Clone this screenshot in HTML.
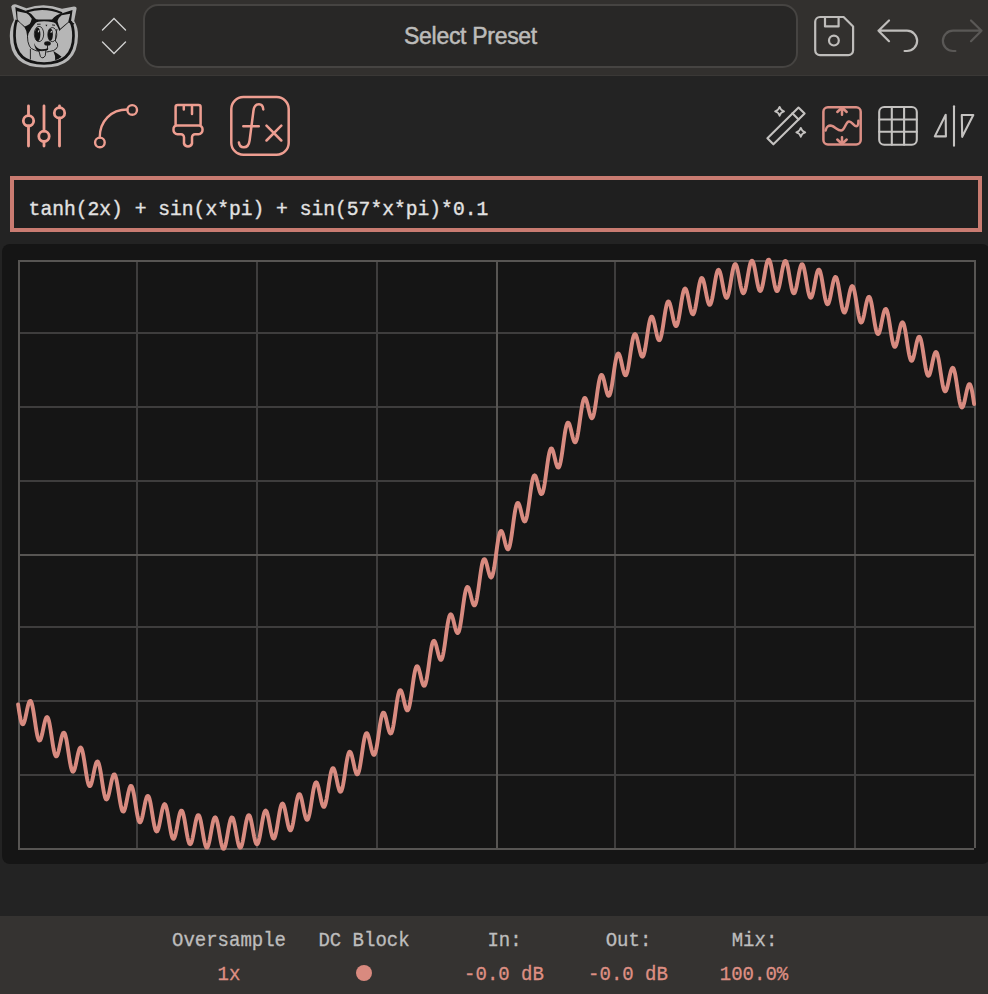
<!DOCTYPE html>
<html>
<head>
<meta charset="utf-8">
<style>
html,body{margin:0;padding:0;}
body{width:988px;height:994px;overflow:hidden;background:#232323;position:relative;font-family:"Liberation Sans",sans-serif;}
.abs{position:absolute;}
#header{left:0;top:0;width:988px;height:75px;background:#32302e;border-bottom:1px solid #3a3836;}
#preset{left:142.5px;top:4px;width:651.5px;height:59.6px;border:2px solid #464442;border-radius:15px;background:#282726;}
#presetText{left:143px;top:23px;width:655px;text-align:center;color:#bdbcba;font-size:23px;letter-spacing:-0.3px;-webkit-text-stroke:0.5px #bdbcba;font-family:"Liberation Sans",sans-serif;line-height:26px;}
#expr{left:10px;top:176px;width:964px;height:48px;border:4px solid #c97b71;background:#1f1f1f;}
#exprText{left:28.6px;top:197px;-webkit-text-stroke:0.35px #e2e2e2;color:#e2e2e2;font-family:"Liberation Mono",monospace;font-size:19.65px;line-height:26px;white-space:pre;}
#panel{left:2px;top:244px;width:988px;height:620px;background:#151515;border-radius:8px;}
#footer{left:0;top:916px;width:988px;height:78px;background:#353331;}
.lbl{transform:scaleY(1.1);transform-origin:50% 16px;-webkit-text-stroke:0.3px #bdbdbd;font-family:"Liberation Mono",monospace;font-size:19px;color:#bdbdbd;white-space:pre;text-align:center;width:200px;line-height:22px;}
.val{transform:scaleY(1.1);transform-origin:50% 16px;-webkit-text-stroke:0.3px #de8f83;font-family:"Liberation Mono",monospace;font-size:19px;color:#de8f83;white-space:pre;text-align:center;width:200px;line-height:22px;}
svg{position:absolute;left:0;top:0;}
</style>
</head>
<body>
<div id="header" class="abs"></div>
<div id="preset" class="abs"></div>
<div id="presetText" class="abs">Select Preset</div>
<div id="expr" class="abs"></div>
<div id="exprText" class="abs">tanh(2x) + sin(x*pi) + sin(57*x*pi)*0.1</div>
<div id="panel" class="abs"></div>
<div id="footer" class="abs"></div>
<div class="abs lbl" style="left:129px;top:930px;">Oversample</div>
<div class="abs val" style="left:129px;top:964px;">1x</div>
<div class="abs lbl" style="left:264px;top:930px;">DC Block</div>
<div class="abs lbl" style="left:404.5px;top:930px;">In:</div>
<div class="abs val" style="left:404px;top:964px;">-0.0 dB</div>
<div class="abs lbl" style="left:528.5px;top:930px;">Out:</div>
<div class="abs val" style="left:528px;top:964px;">-0.0 dB</div>
<div class="abs lbl" style="left:654.5px;top:930px;">Mix:</div>
<div class="abs val" style="left:654px;top:964px;">100.0%</div>
<svg width="988" height="994" viewBox="0 0 988 994">
<!-- grid -->
<g stroke="#3e3d3d" stroke-width="2" fill="none">
<path d="M137 262V848M257 262V848M377 262V848M615 262V848M735 262V848M855 262V848"/>
<path d="M20 333H974M20 407H974M20 481H974M20 627H974M20 701H974M20 775H974"/>
</g>
<g stroke="#575553" stroke-width="2" fill="none">
<path d="M497 262V848M20 555H974"/>
<path d="M19 260V850M18 261H976M975 260V848M18 849H974"/>
</g>
<!-- curve -->
<path d="M18.1 704.4 18.6 707.8 19.1 711.1 19.6 714.2 20.1 717.0 20.6 719.4 21.1 721.4 21.6 722.9 22.1 723.9 22.6 724.3 23.1 724.2 23.6 723.6 24.1 722.4 24.6 720.9 25.1 719.0 25.6 716.8 26.1 714.5 26.6 712.1 27.1 709.7 27.6 707.4 28.1 705.3 28.6 703.6 29.1 702.2 29.6 701.3 30.1 700.9 30.6 701.0 31.1 701.7 31.6 702.9 32.1 704.6 32.6 706.8 33.1 709.4 33.6 712.4 34.1 715.6 34.6 718.9 35.1 722.3 35.6 725.7 36.1 728.9 36.6 731.8 37.1 734.5 37.6 736.7 38.1 738.4 38.6 739.7 39.1 740.4 39.6 740.6 40.1 740.2 40.6 739.3 41.1 738.0 41.6 736.3 42.1 734.3 42.6 732.0 43.1 729.6 43.6 727.1 44.1 724.8 44.6 722.6 45.1 720.6 45.6 719.1 46.1 717.9 46.6 717.2 47.1 717.0 47.6 717.4 48.1 718.3 48.6 719.7 49.1 721.6 49.6 724.0 50.1 726.8 50.6 729.8 51.1 733.1 51.6 736.4 52.1 739.8 52.6 743.1 53.1 746.2 53.6 749.0 54.1 751.4 54.6 753.5 55.1 755.0 55.6 756.0 56.1 756.4 56.6 756.3 57.1 755.7 57.6 754.6 58.1 753.1 58.6 751.2 59.1 749.0 59.6 746.7 60.1 744.2 60.6 741.8 61.1 739.5 61.6 737.3 62.1 735.5 62.6 734.1 63.1 733.1 63.6 732.7 64.1 732.7 64.6 733.3 65.1 734.4 65.6 736.1 66.1 738.2 66.6 740.7 67.1 743.6 67.6 746.8 68.1 750.1 68.6 753.4 69.1 756.8 69.6 759.9 70.1 762.9 70.6 765.5 71.1 767.8 71.6 769.5 72.1 770.8 72.6 771.5 73.1 771.7 73.6 771.3 74.1 770.5 74.6 769.1 75.1 767.4 75.6 765.4 76.1 763.1 76.6 760.6 77.1 758.2 77.6 755.7 78.1 753.5 78.6 751.5 79.1 749.8 79.6 748.6 80.1 747.8 80.6 747.5 81.1 747.8 81.6 748.6 82.1 750.0 82.6 751.8 83.1 754.1 83.6 756.8 84.1 759.8 84.6 763.0 85.1 766.3 85.6 769.6 86.1 772.9 86.6 775.9 87.1 778.7 87.6 781.1 88.1 783.1 88.6 784.7 89.1 785.6 89.6 786.1 90.1 786.0 90.6 785.4 91.1 784.3 91.6 782.7 92.1 780.8 92.6 778.6 93.1 776.2 93.6 773.7 94.1 771.2 94.6 768.8 95.1 766.7 95.6 764.8 96.1 763.2 96.6 762.2 97.1 761.6 97.6 761.5 98.1 762.0 98.6 763.1 99.1 764.6 99.6 766.6 100.1 769.1 100.6 771.9 101.1 774.9 101.6 778.2 102.1 781.5 102.6 784.8 103.1 787.9 103.6 790.8 104.1 793.4 104.6 795.6 105.1 797.4 105.6 798.6 106.1 799.3 106.6 799.5 107.1 799.1 107.6 798.2 108.1 796.9 108.6 795.1 109.1 793.0 109.6 790.7 110.1 788.2 110.6 785.7 111.1 783.2 111.6 780.8 112.1 778.7 112.6 777.0 113.1 775.6 113.6 774.7 114.1 774.4 114.6 774.5 115.1 775.2 115.6 776.5 116.1 778.2 116.6 780.4 117.1 783.0 117.6 785.8 118.1 789.0 118.6 792.2 119.1 795.5 119.6 798.6 120.1 801.7 120.6 804.4 121.1 806.8 121.6 808.8 122.1 810.3 122.6 811.2 123.1 811.6 123.6 811.5 124.1 810.9 124.6 809.7 125.1 808.1 125.6 806.2 126.1 803.9 126.6 801.5 127.1 798.9 127.6 796.3 128.1 793.8 128.6 791.6 129.1 789.6 129.6 787.9 130.1 786.7 130.6 786.0 131.1 785.9 131.6 786.2 132.1 787.1 132.6 788.6 133.1 790.5 133.6 792.8 134.1 795.5 134.6 798.4 135.1 801.6 135.6 804.8 136.1 808.0 136.6 811.1 137.1 813.9 137.6 816.5 138.1 818.6 138.6 820.4 139.1 821.6 139.6 822.2 140.1 822.4 140.6 822.0 141.1 821.0 141.6 819.6 142.1 817.8 142.6 815.7 143.1 813.3 143.6 810.7 144.1 808.1 144.6 805.5 145.1 803.0 145.6 800.8 146.1 798.9 146.6 797.4 147.1 796.4 147.6 795.9 148.1 795.9 148.6 796.5 149.1 797.6 149.6 799.2 150.1 801.2 150.6 803.7 151.1 806.5 151.6 809.5 152.1 812.6 152.6 815.8 153.1 818.9 153.6 821.8 154.1 824.5 154.6 826.8 155.1 828.8 155.6 830.2 156.1 831.1 156.6 831.5 157.1 831.3 157.6 830.6 158.1 829.4 158.6 827.8 159.1 825.7 159.6 823.4 160.1 820.9 160.6 818.2 161.1 815.5 161.6 812.9 162.1 810.5 162.6 808.4 163.1 806.7 163.6 805.3 164.1 804.5 164.6 804.1 165.1 804.4 165.6 805.1 166.1 806.4 166.6 808.2 167.1 810.4 167.6 812.9 168.1 815.7 168.6 818.8 169.1 821.9 169.6 825.0 170.1 828.0 170.6 830.7 171.1 833.2 171.6 835.3 172.1 837.0 172.6 838.1 173.1 838.7 173.6 838.8 174.1 838.3 174.6 837.3 175.1 835.9 175.6 834.0 176.1 831.7 176.6 829.3 177.1 826.6 177.6 823.8 178.1 821.1 178.6 818.6 179.1 816.2 179.6 814.2 180.1 812.6 180.6 811.4 181.1 810.7 181.6 810.6 182.1 811.0 182.6 811.9 183.1 813.4 183.6 815.3 184.1 817.6 184.6 820.2 185.1 823.1 185.6 826.1 186.1 829.2 186.6 832.2 187.1 835.0 187.6 837.6 188.1 839.9 188.6 841.7 189.1 843.1 189.6 843.9 190.1 844.2 190.6 844.0 191.1 843.2 191.6 842.0 192.1 840.2 192.6 838.1 193.1 835.7 193.6 833.1 194.1 830.3 194.6 827.5 195.1 824.8 195.6 822.2 196.1 820.0 196.6 818.0 197.1 816.6 197.6 815.5 198.1 815.1 198.6 815.1 199.1 815.7 199.6 816.8 200.1 818.4 200.6 820.4 201.1 822.9 201.6 825.5 202.1 828.4 202.6 831.4 203.1 834.4 203.6 837.3 204.1 840.0 204.6 842.4 205.1 844.4 205.6 845.9 206.1 847.0 206.6 847.5 207.1 847.5 207.6 847.0 208.1 845.9 208.6 844.4 209.1 842.4 209.6 840.1 210.1 837.5 210.6 834.7 211.1 831.8 211.6 829.0 212.1 826.3 212.6 823.8 213.1 821.6 213.6 819.8 214.1 818.5 214.6 817.6 215.1 817.3 215.6 817.5 216.1 818.3 216.6 819.6 217.1 821.3 217.6 823.5 218.1 826.0 218.6 828.7 219.1 831.6 219.6 834.5 220.1 837.4 220.6 840.1 221.1 842.6 221.6 844.8 222.1 846.5 222.6 847.8 223.1 848.6 223.6 848.8 224.1 848.5 224.6 847.6 225.1 846.3 225.6 844.4 226.1 842.2 226.6 839.7 227.1 836.9 227.6 834.0 228.1 831.1 228.6 828.3 229.1 825.6 229.6 823.1 230.1 821.1 230.6 819.4 231.1 818.2 231.6 817.5 232.1 817.4 232.6 817.8 233.1 818.7 233.6 820.2 234.1 822.0 234.6 824.3 235.1 826.8 235.6 829.6 236.1 832.4 236.6 835.3 237.1 838.0 237.6 840.6 238.1 842.9 238.6 844.8 239.1 846.3 239.6 847.2 240.1 847.7 240.6 847.6 241.1 847.0 241.6 845.8 242.1 844.2 242.6 842.1 243.1 839.7 243.6 836.9 244.1 834.0 244.6 831.0 245.1 828.1 245.6 825.2 246.1 822.5 246.6 820.2 247.1 818.2 247.6 816.7 248.1 815.7 248.6 815.2 249.1 815.2 249.6 815.8 250.1 816.9 250.6 818.5 251.1 820.5 251.6 822.8 252.1 825.4 252.6 828.1 253.1 830.9 253.6 833.6 254.1 836.3 254.6 838.6 255.1 840.7 255.6 842.3 256.1 843.5 256.6 844.2 257.1 844.3 257.6 843.9 258.1 843.0 258.6 841.5 259.1 839.6 259.6 837.3 260.1 834.6 260.6 831.7 261.1 828.7 261.6 825.6 262.1 822.6 262.6 819.8 263.1 817.2 263.6 814.9 264.1 813.1 264.6 811.7 265.1 810.9 265.6 810.5 266.1 810.8 266.6 811.5 267.1 812.8 267.6 814.4 268.1 816.5 268.6 818.9 269.1 821.5 269.6 824.2 270.1 826.9 270.6 829.5 271.1 832.0 271.6 834.1 272.1 835.9 272.6 837.3 273.1 838.2 273.6 838.6 274.1 838.4 274.6 837.7 275.1 836.4 275.6 834.6 276.1 832.5 276.6 829.9 277.1 827.1 277.6 824.0 278.1 820.9 278.6 817.8 279.1 814.8 279.6 811.9 280.1 809.4 280.6 807.3 281.1 805.6 281.6 804.4 282.1 803.7 282.6 803.5 283.1 803.9 283.6 804.8 284.1 806.2 284.6 808.0 285.1 810.2 285.6 812.6 286.1 815.2 286.6 817.8 287.1 820.4 287.6 822.9 288.1 825.2 288.6 827.1 289.1 828.7 289.6 829.7 290.1 830.3 290.6 830.4 291.1 829.9 291.6 828.8 292.1 827.3 292.6 825.2 293.1 822.8 293.6 820.0 294.1 817.0 294.6 813.9 295.1 810.6 295.6 807.5 296.1 804.5 296.6 801.7 297.1 799.3 297.6 797.3 298.1 795.7 298.6 794.6 299.1 794.1 299.6 794.2 300.1 794.7 300.6 795.8 301.1 797.3 301.6 799.2 302.1 801.4 302.6 803.8 303.1 806.4 303.6 809.0 304.1 811.5 304.6 813.8 305.1 815.8 305.6 817.5 306.1 818.8 306.6 819.6 307.1 819.9 307.6 819.6 308.1 818.8 308.6 817.4 309.1 815.6 309.6 813.3 310.1 810.6 310.6 807.6 311.1 804.5 311.6 801.2 312.1 797.9 312.6 794.8 313.1 791.8 313.6 789.1 314.1 786.8 314.6 784.9 315.1 783.5 315.6 782.6 316.1 782.3 316.6 782.5 317.1 783.2 317.6 784.4 318.1 786.0 318.6 788.0 319.1 790.3 319.6 792.7 320.1 795.2 320.6 797.7 321.1 800.0 321.6 802.2 322.1 804.0 322.6 805.4 323.1 806.4 323.6 806.9 324.1 806.9 324.6 806.3 325.1 805.1 325.6 803.5 326.1 801.3 326.6 798.8 327.1 795.9 327.6 792.8 328.1 789.5 328.6 786.1 329.1 782.8 329.6 779.7 330.1 776.7 330.6 774.1 331.1 771.9 331.6 770.2 332.1 769.0 332.6 768.3 333.1 768.1 333.6 768.5 334.1 769.4 334.6 770.7 335.1 772.4 335.6 774.5 336.1 776.8 336.6 779.2 337.1 781.6 337.6 784.0 338.1 786.2 338.6 788.1 339.1 789.7 339.6 790.9 340.1 791.6 340.6 791.8 341.1 791.4 341.6 790.5 342.1 789.0 342.6 787.1 343.1 784.7 343.6 781.9 344.1 778.9 344.6 775.6 345.1 772.2 345.6 768.8 346.1 765.4 346.6 762.3 347.1 759.4 347.6 756.9 348.1 754.9 348.6 753.3 349.1 752.2 349.6 751.7 350.1 751.8 350.6 752.3 351.1 753.3 351.6 754.8 352.1 756.6 352.6 758.7 353.1 761.0 353.6 763.4 354.1 765.7 354.6 768.0 355.1 770.0 355.6 771.7 356.1 773.1 356.6 774.0 357.1 774.4 357.6 774.2 358.1 773.5 358.6 772.3 359.1 770.6 359.6 768.4 360.1 765.7 360.6 762.7 361.1 759.5 361.6 756.1 362.1 752.6 362.6 749.2 363.1 745.8 363.6 742.8 364.1 740.0 364.6 737.6 365.1 735.7 365.6 734.3 366.1 733.4 366.6 733.1 367.1 733.3 367.6 734.0 368.1 735.2 368.6 736.8 369.1 738.7 369.6 740.8 370.1 743.1 370.6 745.4 371.1 747.7 371.6 749.8 372.1 751.6 372.6 753.1 373.1 754.2 373.6 754.8 374.1 754.9 374.6 754.5 375.1 753.5 375.6 751.9 376.1 749.9 376.6 747.4 377.1 744.6 377.6 741.4 378.1 738.0 378.6 734.5 379.1 731.0 379.6 727.5 380.1 724.2 380.6 721.2 381.1 718.6 381.6 716.3 382.1 714.6 382.6 713.4 383.1 712.7 383.6 712.6 384.1 712.9 384.6 713.8 385.1 715.1 385.6 716.8 386.1 718.8 386.6 720.9 387.1 723.2 387.6 725.4 388.1 727.6 388.6 729.5 389.1 731.1 389.6 732.4 390.1 733.2 390.6 733.5 391.1 733.3 391.6 732.6 392.1 731.3 392.6 729.5 393.1 727.2 393.6 724.5 394.1 721.4 394.6 718.1 395.1 714.6 395.6 711.0 396.1 707.4 396.6 704.0 397.1 700.8 397.6 697.9 398.1 695.3 398.6 693.3 399.1 691.7 399.6 690.7 400.1 690.2 400.6 690.2 401.1 690.8 401.6 691.8 402.1 693.3 402.6 695.0 403.1 697.0 403.6 699.2 404.1 701.4 404.6 703.6 405.1 705.6 405.6 707.4 406.1 708.8 406.6 709.8 407.1 710.4 407.6 710.4 408.1 709.9 408.6 708.9 409.1 707.3 409.6 705.2 410.1 702.6 410.6 699.7 411.1 696.5 411.6 693.0 412.1 689.4 412.6 685.7 413.1 682.2 413.6 678.8 414.1 675.6 414.6 672.9 415.1 670.5 415.6 668.6 416.1 667.3 416.6 666.4 417.1 666.1 417.6 666.4 418.1 667.1 418.6 668.3 419.1 669.9 419.6 671.7 420.1 673.7 420.6 675.9 421.1 678.1 421.6 680.1 422.1 682.0 422.6 683.6 423.1 684.8 423.6 685.5 424.1 685.8 424.6 685.6 425.1 684.8 425.6 683.5 426.1 681.6 426.6 679.3 427.1 676.5 427.6 673.4 428.1 670.0 428.6 666.4 429.1 662.7 429.6 659.0 430.1 655.5 430.6 652.2 431.1 649.2 431.6 646.5 432.1 644.3 432.6 642.6 433.1 641.5 433.6 640.9 434.1 640.8 434.6 641.2 435.1 642.1 435.6 643.5 436.1 645.1 436.6 647.0 437.1 649.1 437.6 651.2 438.1 653.3 438.6 655.3 439.1 657.0 439.6 658.4 440.1 659.4 440.6 659.9 441.1 659.9 441.6 659.4 442.1 658.3 442.6 656.7 443.1 654.6 443.6 652.0 444.1 649.0 444.6 645.7 445.1 642.2 445.6 638.5 446.1 634.8 446.6 631.1 447.1 627.7 447.6 624.4 448.1 621.6 448.6 619.1 449.1 617.1 449.6 615.6 450.1 614.7 450.6 614.3 451.1 614.4 451.6 615.0 452.1 616.1 452.6 617.6 453.1 619.3 453.6 621.3 454.1 623.4 454.6 625.5 455.1 627.5 455.6 629.3 456.1 630.9 456.6 632.0 457.1 632.8 457.6 633.1 458.1 632.8 458.6 632.0 459.1 630.7 459.6 628.8 460.1 626.4 460.6 623.6 461.1 620.5 461.6 617.0 462.1 613.4 462.6 609.7 463.1 606.0 463.6 602.4 464.1 599.0 464.6 595.9 465.1 593.1 465.6 590.8 466.1 589.1 466.6 587.8 467.1 587.1 467.6 586.9 468.1 587.3 468.6 588.1 469.1 589.3 469.6 590.9 470.1 592.8 470.6 594.8 471.1 596.9 471.6 598.9 472.1 600.8 472.6 602.5 473.1 603.9 473.6 604.9 474.1 605.4 474.6 605.4 475.1 604.9 475.6 603.8 476.1 602.2 476.6 600.1 477.1 597.5 477.6 594.5 478.1 591.2 478.6 587.7 479.1 584.0 479.6 580.2 480.1 576.5 480.6 573.0 481.1 569.7 481.6 566.8 482.1 564.2 482.6 562.1 483.1 560.6 483.6 559.6 484.1 559.1 484.6 559.1 485.1 559.7 485.6 560.7 486.1 562.1 486.6 563.8 487.1 565.7 487.6 567.8 488.1 569.9 488.6 571.8 489.1 573.7 489.6 575.2 490.1 576.4 490.6 577.2 491.1 577.5 491.6 577.2 492.1 576.4 492.6 575.1 493.1 573.3 493.6 570.9 494.1 568.2 494.6 565.0 495.1 561.6 495.6 557.9 496.1 554.2 496.6 550.5 497.1 546.8 497.6 543.4 498.1 540.2 498.6 537.5 499.1 535.1 499.6 533.3 500.1 532.0 500.6 531.2 501.1 530.9 501.6 531.2 502.1 532.0 502.6 533.2 503.1 534.7 503.6 536.6 504.1 538.5 504.6 540.6 505.1 542.7 505.6 544.6 506.1 546.3 506.6 547.7 507.1 548.7 507.6 549.3 508.1 549.3 508.6 548.8 509.1 547.8 509.6 546.3 510.1 544.2 510.6 541.6 511.1 538.7 511.6 535.4 512.1 531.9 512.6 528.2 513.1 524.4 513.6 520.7 514.1 517.2 514.6 513.9 515.1 510.9 515.6 508.3 516.1 506.2 516.6 504.6 517.1 503.5 517.6 503.0 518.1 503.0 518.6 503.5 519.1 504.5 519.6 505.9 520.1 507.6 520.6 509.5 521.1 511.5 521.6 513.6 522.1 515.6 522.6 517.5 523.1 519.1 523.6 520.3 524.1 521.1 524.6 521.5 525.1 521.3 525.6 520.6 526.1 519.3 526.6 517.6 527.1 515.3 527.6 512.5 528.1 509.4 528.6 506.0 529.1 502.4 529.6 498.7 530.1 495.0 530.6 491.4 531.1 487.9 531.6 484.8 532.1 482.0 532.6 479.6 533.1 477.7 533.6 476.4 534.1 475.6 534.6 475.3 535.1 475.6 535.6 476.4 536.1 477.5 536.6 479.1 537.1 480.9 537.6 482.9 538.1 485.0 538.6 487.1 539.1 489.1 539.6 490.8 540.1 492.3 540.6 493.4 541.1 494.0 541.6 494.1 542.1 493.7 542.6 492.8 543.1 491.3 543.6 489.3 544.1 486.8 544.6 484.0 545.1 480.7 545.6 477.3 546.1 473.6 546.6 469.9 547.1 466.2 547.6 462.7 548.1 459.4 548.6 456.4 549.1 453.8 549.6 451.7 550.1 450.1 550.6 449.0 551.1 448.5 551.6 448.5 552.1 449.0 552.6 450.0 553.1 451.4 553.6 453.1 554.1 455.1 554.6 457.2 555.1 459.3 555.6 461.4 556.1 463.3 556.6 464.9 557.1 466.3 557.6 467.2 558.1 467.6 558.6 467.5 559.1 466.9 559.6 465.8 560.1 464.1 560.6 461.9 561.1 459.2 561.6 456.2 562.1 452.9 562.6 449.4 563.1 445.7 563.6 442.0 564.1 438.4 564.6 435.0 565.1 431.9 565.6 429.1 566.1 426.8 566.6 424.9 567.1 423.6 567.6 422.8 568.1 422.6 568.6 422.9 569.1 423.6 569.6 424.8 570.1 426.4 570.6 428.3 571.1 430.3 571.6 432.5 572.1 434.7 572.6 436.7 573.1 438.5 573.6 440.1 574.1 441.3 574.6 442.0 575.1 442.3 575.6 442.0 576.1 441.1 576.6 439.8 577.1 437.9 577.6 435.5 578.1 432.8 578.6 429.6 579.1 426.2 579.6 422.7 580.1 419.0 580.6 415.4 581.1 411.9 581.6 408.7 582.1 405.8 582.6 403.2 583.1 401.1 583.6 399.5 584.1 398.5 584.6 398.0 585.1 398.0 585.6 398.6 586.1 399.6 586.6 401.0 587.1 402.8 587.6 404.8 588.1 407.0 588.6 409.2 589.1 411.4 589.6 413.4 590.1 415.1 590.6 416.6 591.1 417.6 591.6 418.2 592.1 418.2 592.6 417.7 593.1 416.7 593.6 415.1 594.1 413.1 594.6 410.5 595.1 407.6 595.6 404.4 596.1 401.0 596.6 397.4 597.1 393.8 597.6 390.3 598.1 387.0 598.6 383.9 599.1 381.2 599.6 378.9 600.1 377.1 600.6 375.8 601.1 375.1 601.6 374.9 602.1 375.2 602.6 376.0 603.1 377.3 603.6 378.9 604.1 380.8 604.6 383.0 605.1 385.2 605.6 387.5 606.1 389.6 606.6 391.6 607.1 393.3 607.6 394.6 608.1 395.5 608.6 395.8 609.1 395.7 609.6 395.0 610.1 393.8 610.6 392.1 611.1 389.8 611.6 387.2 612.1 384.2 612.6 380.9 613.1 377.4 613.6 373.9 614.1 370.4 614.6 367.0 615.1 363.8 615.6 361.0 616.1 358.5 616.6 356.5 617.1 354.9 617.6 353.9 618.1 353.5 618.6 353.6 619.1 354.2 619.6 355.3 620.1 356.8 620.6 358.6 621.1 360.7 621.6 363.0 622.1 365.3 622.6 367.6 623.1 369.7 623.6 371.6 624.1 373.2 624.6 374.4 625.1 375.1 625.6 375.3 626.1 375.0 626.6 374.1 627.1 372.7 627.6 370.8 628.1 368.4 628.6 365.6 629.1 362.6 629.6 359.2 630.1 355.8 630.6 352.3 631.1 348.9 631.6 345.7 632.1 342.7 632.6 340.0 633.1 337.8 633.6 336.1 634.1 334.9 634.6 334.2 635.1 334.0 635.6 334.4 636.1 335.3 636.6 336.7 637.1 338.4 637.6 340.4 638.1 342.7 638.6 345.0 639.1 347.4 639.6 349.7 640.1 351.8 640.6 353.6 641.1 355.1 641.6 356.1 642.1 356.6 642.6 356.7 643.1 356.2 643.6 355.1 644.1 353.5 644.6 351.5 645.1 349.0 645.6 346.1 646.1 343.0 646.6 339.6 647.1 336.2 647.6 332.8 648.1 329.5 648.6 326.5 649.1 323.7 649.6 321.3 650.1 319.4 650.6 317.9 651.1 317.0 651.6 316.6 652.1 316.8 652.6 317.5 653.1 318.7 653.6 320.3 654.1 322.2 654.6 324.4 655.1 326.8 655.6 329.2 656.1 331.6 656.6 333.9 657.1 336.0 657.6 337.7 658.1 339.0 658.6 339.9 659.1 340.3 659.6 340.1 660.1 339.4 660.6 338.2 661.1 336.5 661.6 334.3 662.1 331.7 662.6 328.7 663.1 325.6 663.6 322.3 664.1 318.9 664.6 315.6 665.1 312.5 665.6 309.6 666.1 307.1 666.6 304.9 667.1 303.3 667.6 302.1 668.1 301.5 668.6 301.5 669.1 302.0 669.6 303.0 670.1 304.4 670.6 306.2 671.1 308.4 671.6 310.7 672.1 313.2 672.6 315.7 673.1 318.1 673.6 320.4 674.1 322.4 674.6 324.0 675.1 325.2 675.6 325.9 676.1 326.1 676.6 325.8 677.1 324.9 677.6 323.5 678.1 321.6 678.6 319.3 679.1 316.6 679.6 313.6 680.1 310.5 680.6 307.2 681.1 303.9 681.6 300.8 682.1 297.8 682.6 295.1 683.1 292.8 683.6 291.0 684.1 289.6 684.6 288.8 685.1 288.5 685.6 288.8 686.1 289.6 686.6 290.9 687.1 292.6 687.6 294.6 688.1 296.9 688.6 299.4 689.1 302.0 689.6 304.6 690.1 307.0 690.6 309.2 691.1 311.1 691.6 312.6 692.1 313.7 692.6 314.2 693.1 314.3 693.6 313.8 694.1 312.7 694.6 311.1 695.1 309.1 695.6 306.7 696.1 303.9 696.6 300.9 697.1 297.8 697.6 294.5 698.1 291.4 698.6 288.4 699.1 285.6 699.6 283.2 700.1 281.1 700.6 279.6 701.1 278.5 701.6 278.0 702.1 278.1 702.6 278.7 703.1 279.7 703.6 281.3 704.1 283.2 704.6 285.5 705.1 288.0 705.6 290.6 706.1 293.2 706.6 295.8 707.1 298.2 707.6 300.4 708.1 302.2 708.6 303.6 709.1 304.5 709.6 304.9 710.1 304.7 710.6 304.0 711.1 302.8 711.6 301.1 712.1 299.0 712.6 296.5 713.1 293.6 713.6 290.6 714.1 287.5 714.6 284.4 715.1 281.3 715.6 278.5 716.1 275.9 716.6 273.8 717.1 272.0 717.6 270.7 718.1 270.0 718.6 269.8 719.1 270.2 719.6 271.1 720.1 272.5 720.6 274.3 721.1 276.4 721.6 278.9 722.1 281.5 722.6 284.2 723.1 286.9 723.6 289.5 724.1 291.9 724.6 294.0 725.1 295.6 725.6 296.9 726.1 297.6 726.6 297.9 727.1 297.5 727.6 296.7 728.1 295.3 728.6 293.5 729.1 291.2 729.6 288.6 730.1 285.8 730.6 282.8 731.1 279.7 731.6 276.7 732.1 273.8 732.6 271.1 733.1 268.8 733.6 266.9 734.1 265.4 734.6 264.5 735.1 264.1 735.6 264.2 736.1 264.9 736.6 266.1 737.1 267.7 737.6 269.8 738.1 272.1 738.6 274.8 739.1 277.5 739.6 280.3 740.1 283.0 740.6 285.6 741.1 287.9 741.6 289.9 742.1 291.5 742.6 292.6 743.1 293.2 743.6 293.2 744.1 292.7 744.6 291.7 745.1 290.2 745.6 288.2 746.1 285.9 746.6 283.2 747.1 280.3 747.6 277.4 748.1 274.4 748.6 271.5 749.1 268.7 749.6 266.3 750.1 264.2 750.6 262.6 751.1 261.4 751.6 260.8 752.1 260.7 752.6 261.2 753.1 262.1 753.6 263.6 754.1 265.5 754.6 267.8 755.1 270.4 755.6 273.1 756.1 276.0 756.6 278.8 757.1 281.6 757.6 284.1 758.1 286.4 758.6 288.2 759.1 289.7 759.6 290.6 760.1 291.0 760.6 290.9 761.1 290.2 761.6 289.0 762.1 287.3 762.6 285.3 763.1 282.8 763.6 280.1 764.1 277.3 764.6 274.4 765.1 271.5 765.6 268.7 766.1 266.2 766.6 264.0 767.1 262.1 767.6 260.8 768.1 259.9 768.6 259.6 769.1 259.8 769.6 260.6 770.1 261.9 770.6 263.6 771.1 265.8 771.6 268.3 772.1 271.0 772.6 273.9 773.1 276.8 773.6 279.7 774.1 282.4 774.6 284.9 775.1 287.1 775.6 288.8 776.1 290.1 776.6 290.9 777.1 291.1 777.6 290.8 778.1 289.9 778.6 288.6 779.1 286.8 779.6 284.6 780.1 282.1 780.6 279.4 781.1 276.6 781.6 273.7 782.1 270.9 782.6 268.3 783.1 266.0 783.6 264.0 784.1 262.5 784.6 261.4 785.1 260.9 785.6 260.9 786.1 261.4 786.6 262.5 787.1 264.0 787.6 266.0 788.1 268.4 788.6 271.1 789.1 274.0 789.6 277.0 790.1 280.0 790.6 282.9 791.1 285.5 791.6 288.0 792.1 290.0 792.6 291.6 793.1 292.7 793.6 293.3 794.1 293.3 794.6 292.9 795.1 291.8 795.6 290.4 796.1 288.4 796.6 286.2 797.1 283.6 797.6 280.9 798.1 278.1 798.6 275.3 799.1 272.7 799.6 270.3 800.1 268.2 800.6 266.4 801.1 265.2 801.6 264.4 802.1 264.2 802.6 264.5 803.1 265.3 803.6 266.7 804.1 268.5 804.6 270.8 805.1 273.4 805.6 276.2 806.1 279.2 806.6 282.3 807.1 285.3 807.6 288.2 808.1 290.8 808.6 293.1 809.1 295.0 809.6 296.5 810.1 297.4 810.6 297.8 811.1 297.7 811.6 297.0 812.1 295.8 812.6 294.2 813.1 292.2 813.6 289.8 814.1 287.3 814.6 284.6 815.1 281.8 815.6 279.1 816.1 276.7 816.6 274.4 817.1 272.5 817.6 271.1 818.1 270.1 818.6 269.6 819.1 269.7 819.6 270.3 820.1 271.4 820.6 273.1 821.1 275.2 821.6 277.7 822.1 280.4 822.6 283.4 823.1 286.5 823.6 289.6 824.1 292.7 824.6 295.5 825.1 298.0 825.6 300.2 826.1 302.0 826.6 303.3 827.1 304.0 827.6 304.3 828.1 303.9 828.6 303.1 829.1 301.7 829.6 300.0 830.1 297.9 830.6 295.5 831.1 292.9 831.6 290.2 832.1 287.5 832.6 285.0 833.1 282.7 833.6 280.6 834.1 279.0 834.6 277.8 835.1 277.1 835.6 276.9 836.1 277.3 836.6 278.2 837.1 279.6 837.6 281.6 838.1 283.9 838.6 286.6 839.1 289.5 839.6 292.6 840.1 295.8 840.6 298.9 841.1 301.9 841.6 304.7 842.1 307.2 842.6 309.2 843.1 310.8 843.6 311.9 844.1 312.5 844.6 312.5 845.1 312.0 845.6 311.0 846.1 309.5 846.6 307.6 847.1 305.4 847.6 302.9 848.1 300.3 848.6 297.7 849.1 295.1 849.6 292.7 850.1 290.6 850.6 288.8 851.1 287.4 851.6 286.4 852.1 286.0 852.6 286.2 853.1 286.8 853.6 288.0 854.1 289.8 854.6 291.9 855.1 294.5 855.6 297.3 856.1 300.4 856.6 303.6 857.1 306.8 857.6 310.0 858.1 312.9 858.6 315.6 859.1 317.9 859.6 319.8 860.1 321.3 860.6 322.2 861.1 322.5 861.6 322.4 862.1 321.7 862.6 320.5 863.1 318.8 863.6 316.8 864.1 314.6 864.6 312.1 865.1 309.5 865.6 306.9 866.1 304.5 866.6 302.2 867.1 300.3 867.6 298.7 868.1 297.5 868.6 296.9 869.1 296.8 869.6 297.2 870.1 298.1 870.6 299.6 871.1 301.6 871.6 304.0 872.1 306.7 872.6 309.8 873.1 312.9 873.6 316.2 874.1 319.4 874.6 322.6 875.1 325.4 875.6 328.0 876.1 330.2 876.6 331.9 877.1 333.2 877.6 333.9 878.1 334.0 878.6 333.7 879.1 332.8 879.6 331.4 880.1 329.7 880.6 327.6 881.1 325.2 881.6 322.7 882.1 320.2 882.6 317.7 883.1 315.4 883.6 313.3 884.1 311.5 884.6 310.2 885.1 309.3 885.6 308.9 886.1 309.1 886.6 309.8 887.1 311.0 887.6 312.8 888.1 315.0 888.6 317.6 889.1 320.5 889.6 323.6 890.1 326.9 890.6 330.2 891.1 333.5 891.6 336.5 892.1 339.3 892.6 341.8 893.1 343.8 893.6 345.3 894.1 346.4 894.6 346.9 895.1 346.8 895.6 346.2 896.1 345.2 896.6 343.6 897.1 341.7 897.6 339.6 898.1 337.2 898.6 334.7 899.1 332.2 899.6 329.8 900.1 327.6 900.6 325.7 901.1 324.1 901.6 323.0 902.1 322.4 902.6 322.3 903.1 322.8 903.6 323.7 904.1 325.3 904.6 327.3 905.1 329.7 905.6 332.5 906.1 335.5 906.6 338.8 907.1 342.1 907.6 345.4 908.1 348.6 908.6 351.6 909.1 354.3 909.6 356.6 910.1 358.4 910.6 359.8 911.1 360.6 911.6 360.9 912.1 360.6 912.6 359.8 913.1 358.6 913.6 356.9 914.1 354.9 914.6 352.7 915.1 350.2 915.6 347.8 916.1 345.3 916.6 343.0 917.1 341.0 917.6 339.3 918.1 337.9 918.6 337.1 919.1 336.7 919.6 336.9 920.1 337.6 920.6 338.9 921.1 340.6 921.6 342.9 922.1 345.5 922.6 348.5 923.1 351.6 923.6 355.0 924.1 358.3 924.6 361.6 925.1 364.8 925.6 367.7 926.1 370.2 926.6 372.3 927.1 374.0 927.6 375.1 928.1 375.7 928.6 375.7 929.1 375.3 929.6 374.3 930.1 372.9 930.6 371.1 931.1 368.9 931.6 366.6 932.1 364.2 932.6 361.7 933.1 359.4 933.6 357.2 934.1 355.3 934.6 353.8 935.1 352.7 935.6 352.1 936.1 352.0 936.6 352.4 937.1 353.4 937.6 354.9 938.1 357.0 938.6 359.4 939.1 362.2 939.6 365.3 940.1 368.6 940.6 372.0 941.1 375.3 941.6 378.6 942.1 381.6 942.6 384.4 943.1 386.8 943.6 388.7 944.1 390.1 944.6 391.0 945.1 391.4 945.6 391.2 946.1 390.5 946.6 389.3 947.1 387.8 947.6 385.8 948.1 383.6 948.6 381.3 949.1 378.8 949.6 376.4 950.1 374.1 950.6 372.1 951.1 370.4 951.6 369.1 952.1 368.2 952.6 367.8 953.1 368.0 953.6 368.7 954.1 370.0 954.6 371.7 955.1 373.9 955.6 376.6 956.1 379.5 956.6 382.7 957.1 386.1 957.6 389.5 958.1 392.8 958.6 396.0 959.1 399.0 959.6 401.6 960.1 403.8 960.6 405.5 961.1 406.7 961.6 407.4 962.1 407.5 962.6 407.1 963.1 406.2 963.6 404.8 964.1 403.1 964.6 401.0 965.1 398.7 965.6 396.3 966.1 393.9 966.6 391.6 967.1 389.4 967.6 387.5 968.1 386.0 968.6 384.8 969.1 384.2 969.6 384.1 970.1 384.5 970.6 385.5 971.1 387.0 971.6 389.0 972.1 391.4 972.6 394.2 973.1 397.3 973.6 400.6 974.1 404.0" stroke="#d88b80" stroke-width="3.9" fill="none" stroke-linejoin="round" stroke-linecap="round"/>
<!-- DC dot -->
<circle cx="364" cy="973" r="8" fill="#d98a7f"/>
<!-- chevrons -->
<g stroke="#cfcfcf" stroke-width="1.4" fill="none" stroke-linecap="round">
<path d="M102.5 30L114 18.5L125.5 30"/>
<path d="M102.5 42L114 53.5L125.5 42"/>
</g>
<!-- save / undo / redo -->
<g stroke="#bfbdbb" stroke-width="2.2" fill="none" stroke-linecap="round" stroke-linejoin="round">
<path d="M843.6 17H820A4.8 4.8 0 0 0 815.2 21.8V50.3A4.8 4.8 0 0 0 820 55.1H848.3A4.8 4.8 0 0 0 853.1 50.3V26.5Z"/>
<path d="M825 17V26.4H838.6V17"/>
<circle cx="833.9" cy="40.6" r="4.9"/>
<path d="M889 20.5L878.5 30.7L889 41.2M878.5 30.7H907A10.15 10.15 0 0 1 907 51H904.6"/>
</g>
<g stroke="#5a5856" stroke-width="2.2" fill="none" stroke-linecap="round" stroke-linejoin="round">
<path d="M971 20.5L981.5 30.7L971 41.2M981.5 30.7H953A10.15 10.15 0 0 0 953 51H955.4"/>
</g>
<!-- toolbar salmon icons -->
<g stroke="#ee9e91" stroke-width="2.8" fill="none" stroke-linecap="round" stroke-linejoin="round">
<path d="M28.5 106V115.5M28.5 126V146M44 106V131M44 141.5V146M59.5 106V107.8M59.5 118V146"/>
<circle cx="28.5" cy="120.8" r="5.2"/>
<circle cx="44" cy="136.3" r="5.2"/>
<circle cx="59.5" cy="112.9" r="5.2"/>
</g>
<g stroke="#ee9e91" stroke-width="2.4" fill="none" stroke-linecap="round" stroke-linejoin="round">
<circle cx="99.9" cy="142.4" r="4.8"/>
<circle cx="132.2" cy="109.9" r="4.8"/>
<path d="M99.7 137.5C99.7 121 111 109.5 127.3 109.5"/>
</g>
<g stroke="#ee9e91" stroke-width="2.5" fill="none" stroke-linecap="round" stroke-linejoin="round">
<path d="M175.6 124.5V107A2 2 0 0 1 177.6 105H198.6A2 2 0 0 1 200.6 107V124.5"/>
<path d="M183.8 106.5V109.5M192 106.5V114"/>
<path d="M177.5 125.5H199A3.5 3.5 0 0 1 202.5 129V130A4 4 0 0 1 198.5 134.2H195A3 3 0 0 0 192 137.2V143.5A4.2 4.2 0 0 1 184 143.5V137.2A3 3 0 0 0 181 134.2H177.5A4 4 0 0 1 173.5 130V129.5A3.5 3.5 0 0 1 177.5 125.5Z"/>
</g>
<g stroke="#ee9e91" stroke-width="2.5" fill="none" stroke-linecap="round" stroke-linejoin="round">
<rect x="231.3" y="97" width="57.4" height="57.7" rx="12"/>
<path d="M263.3 109.5C263 106 261.3 104.3 259 104.3C256 104.3 254 106.5 253.5 110.5L249.6 140.5C249 145 247 147.3 243.8 147.3C241 147.3 239.3 145.3 238.9 142.5"/>
<path d="M243.3 126.2H258.8M266.5 125.7L281.3 140.5M281.3 125.7L266.5 140.5"/>
</g>
<!-- right toolbar icons -->
<g stroke="#c4c2c0" stroke-width="2.1" fill="none" stroke-linecap="round" stroke-linejoin="round">
<path d="M798.5 107.6L804.6 113.6L773.4 144.3L767.4 138.3Z"/>
<path d="M792.4 113.3L798.6 119.4"/>
</g>
<g fill="none" stroke="#c4c2c0" stroke-width="1.8" stroke-linejoin="round"><path d="M779.6 106.8Q780.5 110.39999999999999 784.1 111.3Q780.5 112.2 779.6 115.8Q778.7 112.2 775.1 111.3Q778.7 110.39999999999999 779.6 106.8Z"/><path d="M800.8 127.80000000000001Q801.6999999999999 131.4 805.3 132.3Q801.6999999999999 133.20000000000002 800.8 136.8Q799.9 133.20000000000002 796.3 132.3Q799.9 131.4 800.8 127.80000000000001Z"/></g>
<g stroke="#dc8f85" stroke-width="2.5" fill="none" stroke-linecap="round" stroke-linejoin="round">
<rect x="823.4" y="107.2" width="37.3" height="37.3" rx="4.5"/>
<path d="M842 108V114.8M837.3 112L842 107.5L846.7 112M842 137.3V144M837.3 139.5L842 144L846.7 139.5"/>
<path d="M825.6 130.6C826.5 126 829 125.2 831.5 125.8C835 126.6 837.5 130.6 841 130.6C845 130.6 845.5 121.6 849 121.4C852 121.2 853.5 126 856.2 126.2C858.3 126.3 858.5 123 858.4 120.8"/>
</g>
<g stroke="#c4c2c0" stroke-width="2.1" fill="none" stroke-linecap="round" stroke-linejoin="round">
<rect x="879.2" y="107" width="37.6" height="37.8" rx="5"/>
<path d="M891.8 107V144.8M904.1 107V144.8M879.2 119.5H916.8M879.2 131.7H916.8"/>
<path d="M954 106.2V145.7"/>
<path d="M945.7 114.8L934.8 136.4H945.9Z"/>
<path d="M961.8 115H973.3L962.2 136.8Z"/>
</g>
<!-- logo -->
<g id="logo">
<path fill="#b6b6b6" d="M11.2 6.5Q12.5 3.8 16.3 4.4L26.5 8.3Q44 2 62 8.8L74 6.4Q77 6.5 76.5 9L74.2 21Q78.2 27 78 36Q77.5 67.6 44 67.6Q9.8 67.6 9.8 36Q9.8 27 13.9 19.9Z"/>
<path fill="none" stroke="#141414" stroke-width="2.7" d="M16.8 20Q14.4 26 14.5 36Q14.8 63.4 44 63.5Q73.3 63.4 73.5 36Q73.6 27 70.6 21.5"/>
<path fill="none" stroke="#141414" stroke-width="2.1" d="M26.5 11.6Q44 5.5 62 13.2"/>
<path fill="#141414" d="M15.3 7L27 11.2Q32 13.5 34.8 18Q36 20 40 19.4L52 19.6Q56 14.5 61.5 13.6L72.5 10.1L70.9 22L74.4 23.5L73 25L68.6 22.6L60.6 29.6L59.4 31Q57.5 26 55.6 23.5Q53 21.6 44 21.3Q37 21.5 35.5 23Q31 28 28.5 33.5L27.5 38.5L26.3 31L24.6 27.4L20 23L16.8 20.5Z"/>
<path fill="#b6b6b6" d="M17.1 11.2L26.5 13.3Q30 15 31.8 18.8Q31 22 29.6 24.1Q27 26 24.8 26.6Q22 24 20.2 22.4L17.6 19.4Z"/>
<path fill="#b6b6b6" d="M70.2 13.8L61.6 15.2Q58.5 17.5 57.5 21Q58.5 25.5 60.2 28.8Q64 25.5 68.2 22.1Z"/>
<path fill="none" stroke="#141414" stroke-width="0.9" d="M27.5 36.5Q27.5 42 29 45Q30 47.5 31.5 48.5Q34 50 37.5 51.2M30.4 48.8V59.5M57 29Q55.5 35 55.4 41Q58.5 43.5 57.6 46.5Q56.5 49.5 53.5 50.5Q49.5 51.6 46.5 52M37 24.2H40.6M52.1 24.9L55 25.3"/>
<ellipse cx="39" cy="34" rx="4.7" ry="7.7" fill="none" stroke="#141414" stroke-width="0.8"/>
<ellipse cx="52.3" cy="34.6" rx="4.5" ry="7.1" fill="none" stroke="#141414" stroke-width="0.8"/>
<ellipse cx="37.6" cy="34.4" rx="2.8" ry="6.9" fill="#141414"/>
<ellipse cx="50.4" cy="34.6" rx="2.5" ry="6.2" fill="#141414"/>
<ellipse cx="38.6" cy="31.2" rx="0.6" ry="1.3" fill="#c8c8c8" transform="rotate(25 38.6 31.2)"/>
<ellipse cx="51.3" cy="31.8" rx="0.6" ry="1.2" fill="#c8c8c8" transform="rotate(25 51.3 31.8)"/>
<ellipse cx="47.5" cy="43.5" rx="3.3" ry="2.2" fill="#141414"/>
<path fill="#141414" d="M34 43Q36.5 49 41 49.3Q45 49.5 48.2 48L48 49.8Q44 52.3 39.5 52Q35 50.8 34 43Z"/><path stroke="#141414" stroke-width="0.9" d="M47.5 45.3V48.8"/>
<path fill="#b6b6b6" stroke="#141414" stroke-width="0.9" d="M38.8 50.4L40.4 56.6Q43 59.5 45.3 55.6L45.9 50Q42 51.2 38.8 50.4Z"/>
<path fill="#141414" d="M53.3 51Q57.5 53.5 61.6 56.8Q58.5 59.5 55.2 60.2Q55.5 55.5 53.3 51Z"/>
<path fill="#141414" d="M45.4 24.8L47.4 24.8L46.4 26.4Z"/>
</g>

</svg>
</body>
</html>
